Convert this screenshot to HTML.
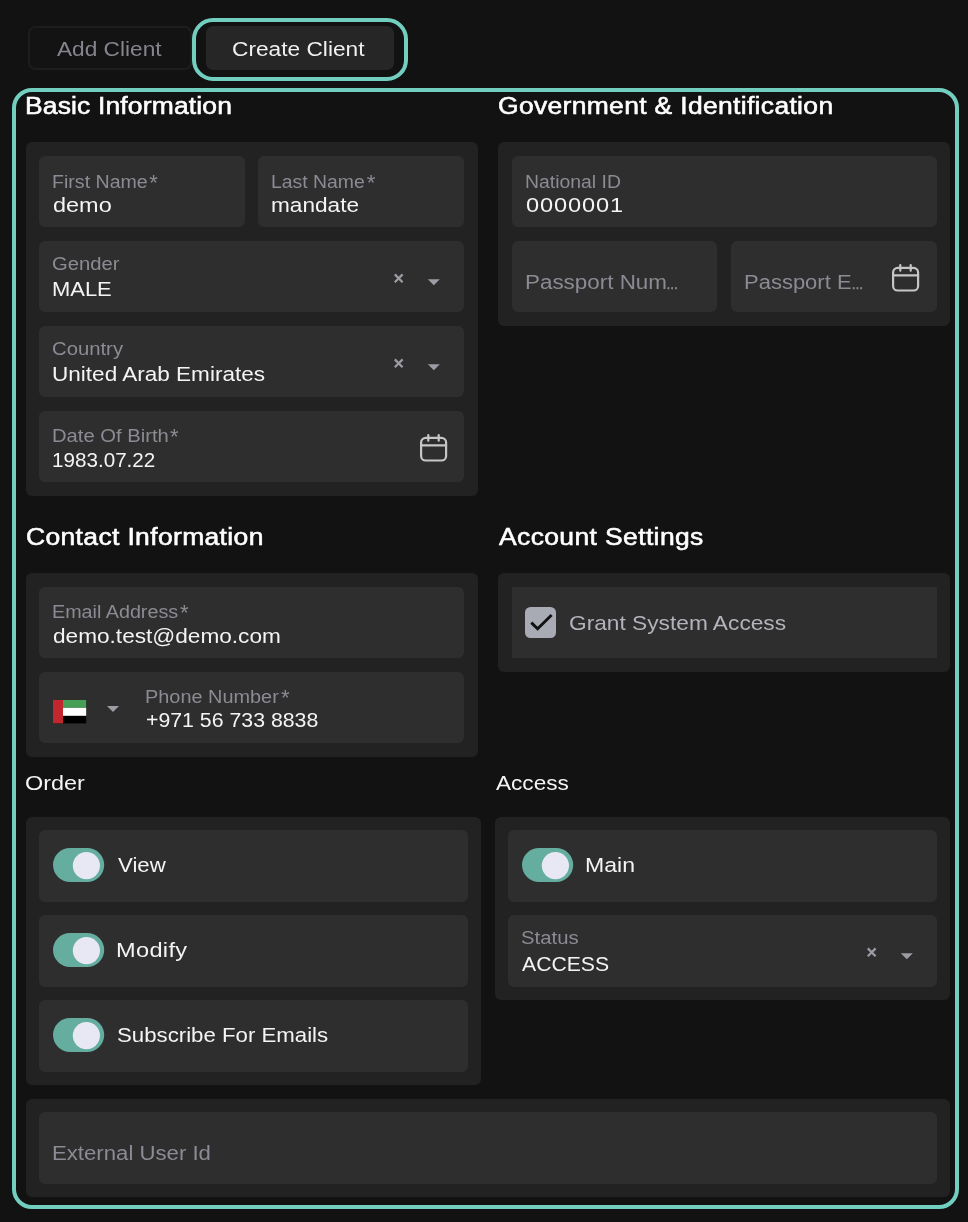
<!DOCTYPE html>
<html lang="en"><head><meta charset="utf-8"><title>Create Client</title>
<style>
html,body{margin:0;padding:0;background:#121212;}
body{width:968px;height:1222px;position:relative;overflow:hidden;font-family:"Liberation Sans",sans-serif;}
.b{position:absolute;display:block;}
.tx{position:absolute;left:0;top:0;width:968px;height:1222px;will-change:transform;}
.t{position:absolute;white-space:pre;display:block;transform-origin:0 0;}
</style></head><body>
<div class="b" style="left:28px;top:26px;width:164px;height:44px;background:#131313;border-radius:7px;box-sizing:border-box;border:2px solid #1d1d1d;"></div>
<div class="b" style="left:206px;top:26px;width:188px;height:44px;background:#262626;border-radius:7px;"></div>
<div class="b" style="left:192px;top:18px;width:216px;height:63px;box-sizing:border-box;border:4px solid #72cfc0;border-radius:21px;"></div>
<div class="b" style="left:12px;top:88px;width:947px;height:1121px;box-sizing:border-box;border:4px solid #72cfc0;border-radius:20px;"></div>
<div class="b" style="left:26px;top:142px;width:452px;height:354px;background:#222222;border-radius:6px;"></div>
<div class="b" style="left:498px;top:142px;width:452px;height:184px;background:#222222;border-radius:6px;"></div>
<div class="b" style="left:26px;top:573px;width:452px;height:184px;background:#222222;border-radius:6px;"></div>
<div class="b" style="left:498px;top:573px;width:452px;height:99px;background:#222222;border-radius:6px;"></div>
<div class="b" style="left:26px;top:817px;width:455px;height:268px;background:#222222;border-radius:6px;"></div>
<div class="b" style="left:495px;top:817px;width:455px;height:183px;background:#222222;border-radius:6px;"></div>
<div class="b" style="left:26px;top:1099px;width:924px;height:98px;background:#222222;border-radius:6px;"></div>
<div class="b" style="left:39px;top:156px;width:206px;height:71px;background:#2e2e2e;border-radius:6px;"></div>
<div class="b" style="left:258px;top:156px;width:206px;height:71px;background:#2e2e2e;border-radius:6px;"></div>
<div class="b" style="left:39px;top:241px;width:425px;height:71px;background:#2e2e2e;border-radius:6px;"></div>
<div class="b" style="left:39px;top:326px;width:425px;height:71px;background:#2e2e2e;border-radius:6px;"></div>
<div class="b" style="left:39px;top:411px;width:425px;height:71px;background:#2e2e2e;border-radius:6px;"></div>
<div class="b" style="left:512px;top:156px;width:425px;height:71px;background:#2e2e2e;border-radius:6px;"></div>
<div class="b" style="left:512px;top:241px;width:205px;height:71px;background:#2e2e2e;border-radius:6px;"></div>
<div class="b" style="left:731px;top:241px;width:206px;height:71px;background:#2e2e2e;border-radius:6px;"></div>
<div class="b" style="left:39px;top:587px;width:425px;height:71px;background:#2e2e2e;border-radius:6px;"></div>
<div class="b" style="left:39px;top:672px;width:425px;height:71px;background:#2e2e2e;border-radius:6px;"></div>
<div class="b" style="left:512px;top:587px;width:425px;height:71px;background:#2e2e2e;border-radius:0px;"></div>
<div class="b" style="left:39px;top:830px;width:429px;height:72px;background:#2e2e2e;border-radius:6px;"></div>
<div class="b" style="left:39px;top:915px;width:429px;height:72px;background:#2e2e2e;border-radius:6px;"></div>
<div class="b" style="left:39px;top:1000px;width:429px;height:72px;background:#2e2e2e;border-radius:6px;"></div>
<div class="b" style="left:508px;top:830px;width:429px;height:72px;background:#2e2e2e;border-radius:6px;"></div>
<div class="b" style="left:508px;top:915px;width:429px;height:72px;background:#2e2e2e;border-radius:6px;"></div>
<div class="b" style="left:39px;top:1112px;width:898px;height:72px;background:#2e2e2e;border-radius:6px;"></div>
<svg class="b" style="left:0;top:0" width="968" height="1222" viewBox="0 0 968 1222"><path d="M394.8 274.4L402.6 282.2M402.6 274.4L394.8 282.2" stroke="#9c9ca4" stroke-width="2.2" fill="none"/><path d="M427.8 279.2h12l-6 6z" fill="#9c9ca4"/><path d="M394.8 359.4L402.6 367.2M402.6 359.4L394.8 367.2" stroke="#9c9ca4" stroke-width="2.2" fill="none"/><path d="M427.8 364.2h12l-6 6z" fill="#9c9ca4"/><path d="M867.8 948.4L875.6 956.2M875.6 948.4L867.8 956.2" stroke="#9c9ca4" stroke-width="2.2" fill="none"/><path d="M900.8 953.2h12l-6 6z" fill="#9c9ca4"/><g fill="none" stroke="#c6c6c6" stroke-width="2.2" stroke-linecap="round"><rect x="421.1" y="437.9" width="25" height="22.6" rx="4.6"/><path d="M421.1 445.3h25M428.3 435.1v5.6M438.7 435.1v5.6"/></g><g fill="none" stroke="#c6c6c6" stroke-width="2.2" stroke-linecap="round"><rect x="893.1" y="267.9" width="25" height="22.6" rx="4.6"/><path d="M893.1 275.3h25M900.3 265.1v5.6M910.7 265.1v5.6"/></g><rect x="53" y="700" width="33.2" height="23.4" fill="#000"/><rect x="53" y="700" width="33.2" height="7.8" fill="#479f56"/><rect x="53" y="707.8" width="33.2" height="8" fill="#fff"/><rect x="53" y="700" width="10" height="23.4" fill="#c1272d"/><path d="M107.0 706.0h12l-6 6z" fill="#9c9ca4"/><rect x="525" y="607" width="31" height="31" rx="5.5" fill="#a9abb4"/><path d="M531.3 622.6L537.6 628.7L551.6 615.0" stroke="#111" stroke-width="2.9" fill="none"/><rect x="53" y="848" width="51.2" height="34" rx="17" fill="#64ad9f"/><circle cx="86.4" cy="865.6" r="13.6" fill="#e8e8f5"/><rect x="53" y="933" width="51.2" height="34" rx="17" fill="#64ad9f"/><circle cx="86.4" cy="950.6" r="13.6" fill="#e8e8f5"/><rect x="53" y="1018" width="51.2" height="34" rx="17" fill="#64ad9f"/><circle cx="86.4" cy="1035.6" r="13.6" fill="#e8e8f5"/><rect x="522" y="848" width="51.2" height="34" rx="17" fill="#64ad9f"/><circle cx="555.4" cy="865.6" r="13.6" fill="#e8e8f5"/></svg>
<div class="tx">
<span class="t" style="left:57.20px;top:37.00px;font-size:20px;line-height:24px;font-weight:400;color:#85858d;letter-spacing:0.000px;transform:scaleX(1.1328)">Add Client</span>
<span class="t" style="left:232.16px;top:37.00px;font-size:20px;line-height:24px;font-weight:400;color:#f0f0f0;letter-spacing:0.000px;transform:scaleX(1.1352)">Create Client</span>
<span class="t" style="left:25.27px;top:92.00px;font-size:23px;line-height:28px;font-weight:400;color:#ffffff;letter-spacing:0.139px;transform:scaleX(1.1500);-webkit-text-stroke:0.55px #ffffff">Basic Information</span>
<span class="t" style="left:51.99px;top:171.00px;font-size:18.3px;line-height:22px;font-weight:400;color:#8b8b93;letter-spacing:0.000px;transform:scaleX(1.0713)">First Name</span>
<span class="t" style="left:149.28px;top:168.94px;font-size:22.16px;line-height:27px;color:#8b8b93">*</span>
<span class="t" style="left:52.74px;top:192.00px;font-size:20.5px;line-height:25px;font-weight:400;color:#f4f4f4;letter-spacing:0.000px;transform:scaleX(1.1457)">demo</span>
<span class="t" style="left:271.21px;top:171.00px;font-size:18.3px;line-height:22px;font-weight:400;color:#8b8b93;letter-spacing:0.000px;transform:scaleX(1.0609)">Last Name</span>
<span class="t" style="left:366.78px;top:168.94px;font-size:22.16px;line-height:27px;color:#8b8b93">*</span>
<span class="t" style="left:271.42px;top:192.00px;font-size:20.5px;line-height:25px;font-weight:400;color:#f4f4f4;letter-spacing:0.000px;transform:scaleX(1.1035)">mandate</span>
<span class="t" style="left:52.49px;top:253.00px;font-size:18.3px;line-height:22px;font-weight:400;color:#8b8b93;letter-spacing:0.000px;transform:scaleX(1.1079)">Gender</span>
<span class="t" style="left:51.73px;top:276.00px;font-size:20.5px;line-height:25px;font-weight:400;color:#f4f4f4;letter-spacing:0.000px;transform:scaleX(1.0704)">MALE</span>
<span class="t" style="left:52.49px;top:338.00px;font-size:18.3px;line-height:22px;font-weight:400;color:#8b8b93;letter-spacing:0.000px;transform:scaleX(1.1095)">Country</span>
<span class="t" style="left:51.95px;top:361.00px;font-size:20.5px;line-height:25px;font-weight:400;color:#f4f4f4;letter-spacing:0.000px;transform:scaleX(1.0997)">United Arab Emirates</span>
<span class="t" style="left:51.94px;top:425.00px;font-size:18.3px;line-height:22px;font-weight:400;color:#8b8b93;letter-spacing:0.000px;transform:scaleX(1.1049)">Date Of Birth</span>
<span class="t" style="left:169.88px;top:423.34px;font-size:22.16px;line-height:27px;color:#8b8b93">*</span>
<span class="t" style="left:52.49px;top:447.00px;font-size:20.5px;line-height:25px;font-weight:400;color:#f4f4f4;letter-spacing:0.000px;transform:scaleX(1.0070)">1983.07.22</span>
<span class="t" style="left:498.44px;top:92.00px;font-size:23px;line-height:28px;font-weight:400;color:#ffffff;letter-spacing:0.291px;transform:scaleX(1.1500);-webkit-text-stroke:0.55px #ffffff">Government &amp; Identification</span>
<span class="t" style="left:524.81px;top:171.00px;font-size:18.3px;line-height:22px;font-weight:400;color:#8b8b93;letter-spacing:0.000px;transform:scaleX(1.0602)">National ID</span>
<span class="t" style="left:525.54px;top:192.00px;font-size:20.5px;line-height:25px;font-weight:400;color:#f4f4f4;letter-spacing:0.768px;transform:scaleX(1.1500)">0000001</span>
<span class="t" style="left:524.92px;top:270.00px;font-size:20px;line-height:24px;font-weight:400;color:#8b8b93;letter-spacing:0.000px;transform:scaleX(1.1202)">Passport Num</span>
<span class="t" style="left:666.15px;top:277.54px;font-size:11.89px;line-height:14px;color:#8b8b93;-webkit-text-stroke:0.6px #8b8b93">…</span>
<span class="t" style="left:744.15px;top:270.00px;font-size:20px;line-height:24px;font-weight:400;color:#8b8b93;letter-spacing:0.000px;transform:scaleX(1.0995)">Passport E</span>
<span class="t" style="left:851.45px;top:277.54px;font-size:11.89px;line-height:14px;color:#8b8b93;-webkit-text-stroke:0.6px #8b8b93">…</span>
<span class="t" style="left:25.54px;top:523.00px;font-size:23px;line-height:28px;font-weight:400;color:#ffffff;letter-spacing:0.316px;transform:scaleX(1.1500);-webkit-text-stroke:0.55px #ffffff">Contact Information</span>
<span class="t" style="left:52.08px;top:601.00px;font-size:18.3px;line-height:22px;font-weight:400;color:#8b8b93;letter-spacing:0.000px;transform:scaleX(1.0797)">Email Address</span>
<span class="t" style="left:180.08px;top:599.24px;font-size:22.16px;line-height:27px;color:#8b8b93">*</span>
<span class="t" style="left:52.87px;top:623.00px;font-size:20.5px;line-height:25px;font-weight:400;color:#f4f4f4;letter-spacing:0.000px;transform:scaleX(1.1032)">demo.test@demo.com</span>
<span class="t" style="left:145.07px;top:686.00px;font-size:18.3px;line-height:22px;font-weight:400;color:#8b8b93;letter-spacing:0.000px;transform:scaleX(1.0878)">Phone Number</span>
<span class="t" style="left:281.08px;top:683.94px;font-size:22.16px;line-height:27px;color:#8b8b93">*</span>
<span class="t" style="left:145.66px;top:707.00px;font-size:20.5px;line-height:25px;font-weight:400;color:#f4f4f4;letter-spacing:0.000px;transform:scaleX(1.0384)">+971 56 733 8838</span>
<span class="t" style="left:498.99px;top:523.00px;font-size:23px;line-height:28px;font-weight:400;color:#ffffff;letter-spacing:0.337px;transform:scaleX(1.1500);-webkit-text-stroke:0.55px #ffffff">Account Settings</span>
<span class="t" style="left:568.92px;top:610.00px;font-size:21px;line-height:25px;font-weight:400;color:#b3b3bb;letter-spacing:0.000px;transform:scaleX(1.0814)">Grant System Access</span>
<span class="t" style="left:25.06px;top:770.00px;font-size:20.5px;line-height:25px;font-weight:400;color:#f4f4f4;letter-spacing:0.000px;transform:scaleX(1.1431)">Order</span>
<span class="t" style="left:495.90px;top:770.00px;font-size:20.5px;line-height:25px;font-weight:400;color:#f4f4f4;letter-spacing:0.000px;transform:scaleX(1.1019)">Access</span>
<span class="t" style="left:118.13px;top:852.00px;font-size:20.5px;line-height:25px;font-weight:400;color:#f4f4f4;letter-spacing:0.000px;transform:scaleX(1.0834)">View</span>
<span class="t" style="left:116.19px;top:937.00px;font-size:20.5px;line-height:25px;font-weight:400;color:#f4f4f4;letter-spacing:0.283px;transform:scaleX(1.1500)">Modify</span>
<span class="t" style="left:117.12px;top:1022.00px;font-size:20.5px;line-height:25px;font-weight:400;color:#f4f4f4;letter-spacing:0.000px;transform:scaleX(1.0839)">Subscribe For Emails</span>
<span class="t" style="left:585.13px;top:852.00px;font-size:20.5px;line-height:25px;font-weight:400;color:#f4f4f4;letter-spacing:0.000px;transform:scaleX(1.1253)">Main</span>
<span class="t" style="left:521.47px;top:927.00px;font-size:18.3px;line-height:22px;font-weight:400;color:#8b8b93;letter-spacing:0.000px;transform:scaleX(1.1109)">Status</span>
<span class="t" style="left:522.30px;top:951.00px;font-size:20.5px;line-height:25px;font-weight:400;color:#f4f4f4;letter-spacing:0.000px;transform:scaleX(1.0335)">ACCESS</span>
<span class="t" style="left:52.24px;top:1141.00px;font-size:20px;line-height:24px;font-weight:400;color:#8b8b93;letter-spacing:0.000px;transform:scaleX(1.1082)">External User Id</span>
</div>
</body></html>
